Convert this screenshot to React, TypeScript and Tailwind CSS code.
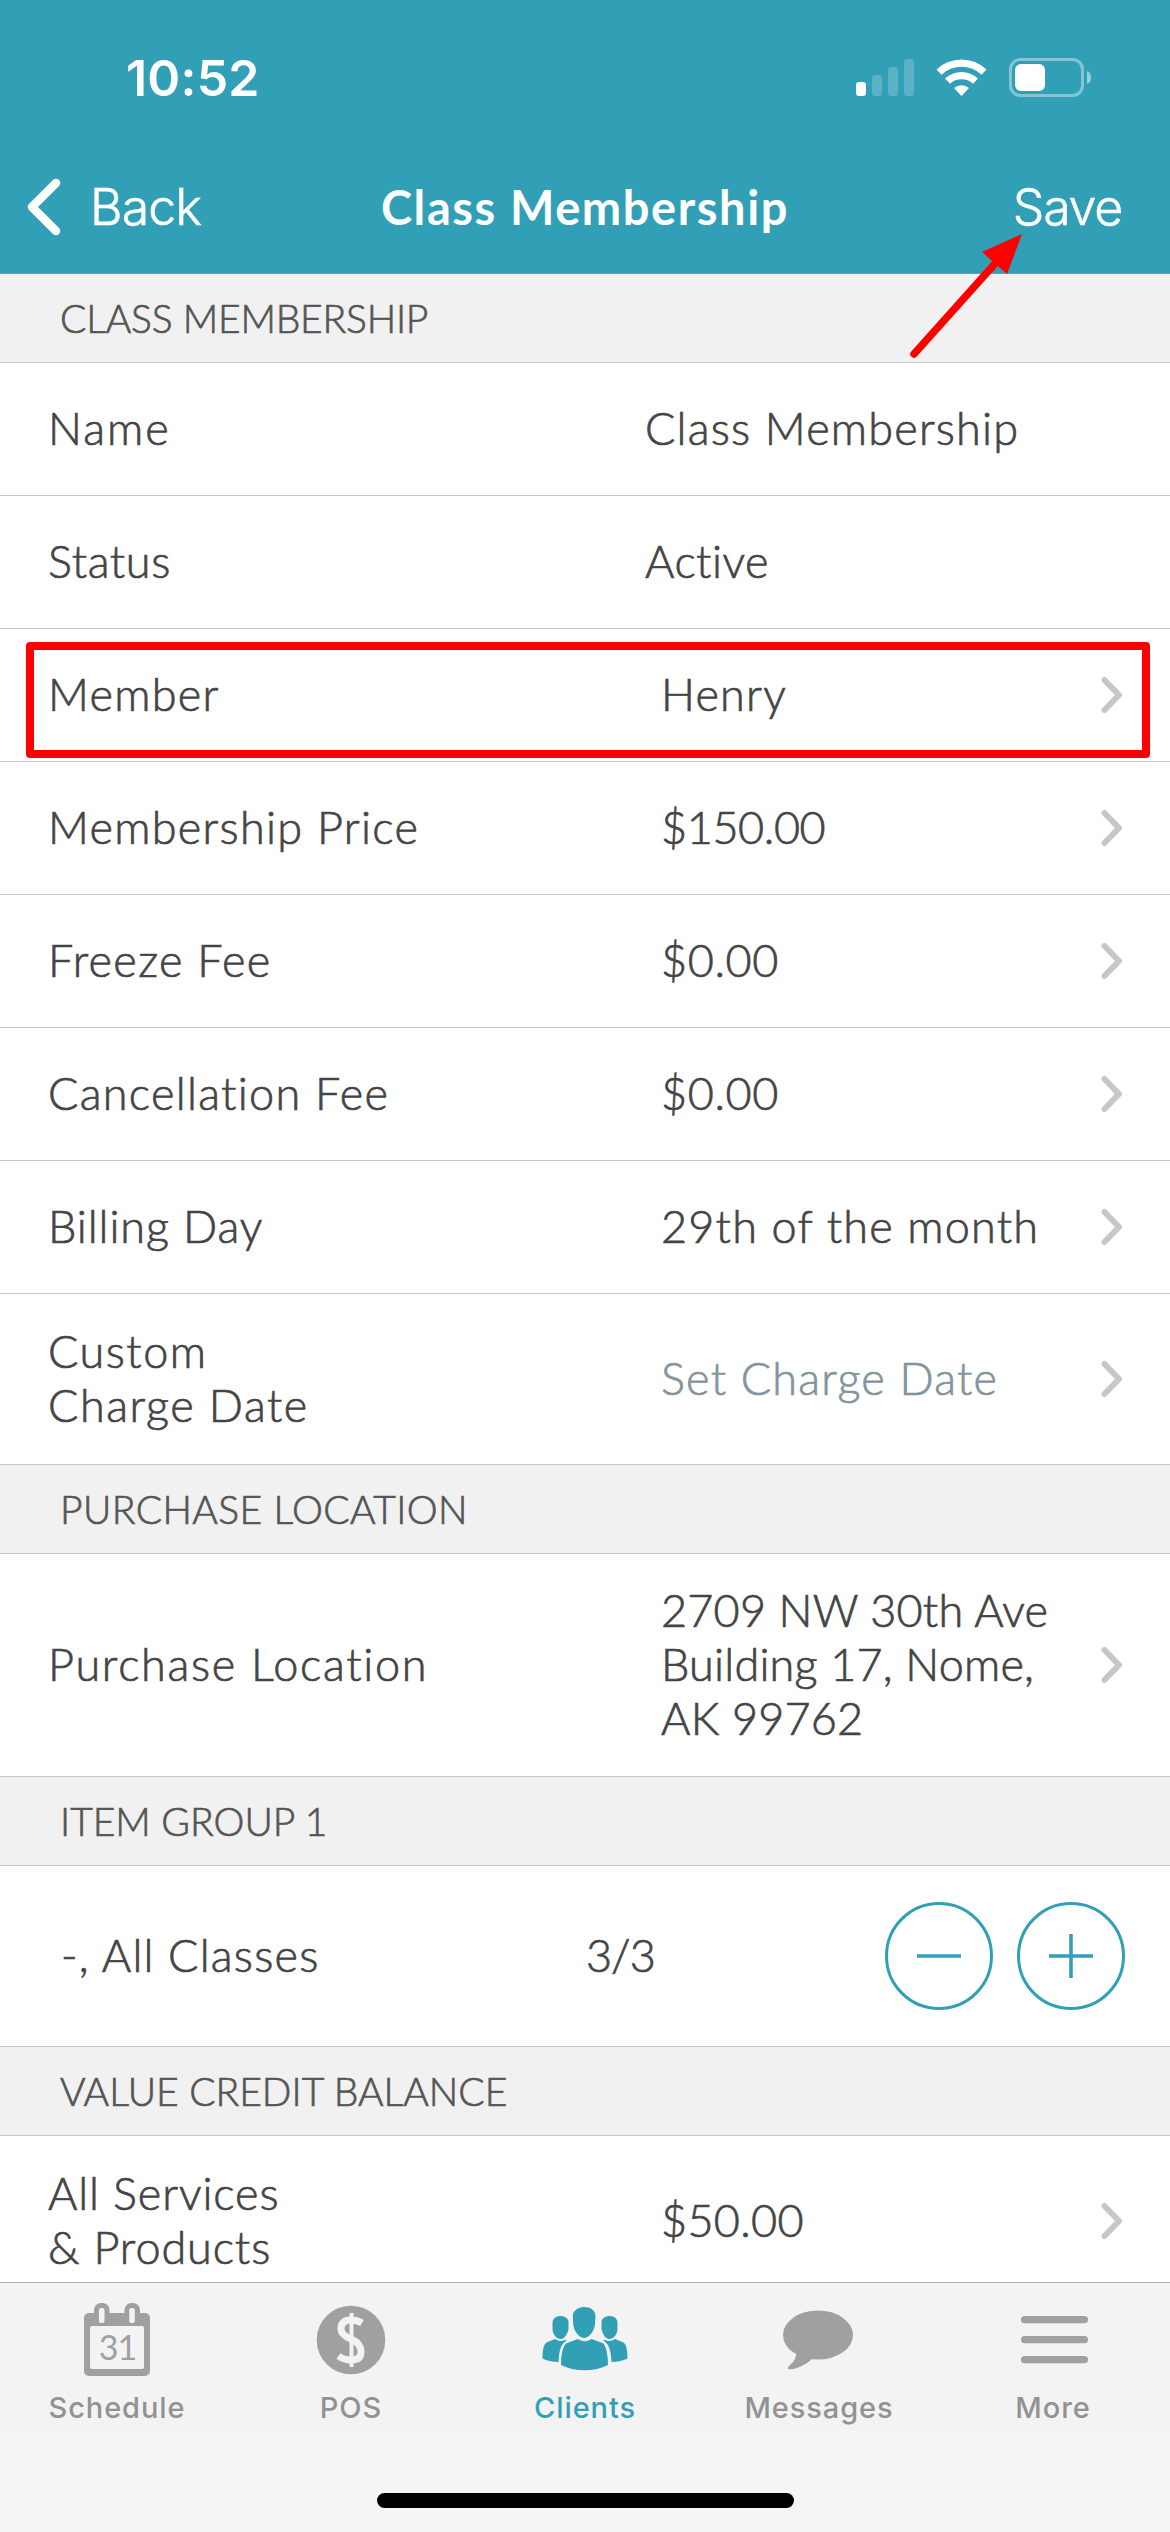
import React from 'react';

type RowProps = {
  label: string;
  value: string;
  size?: string;
  labelTracking?: string;
  valueTracking?: string;
  muted?: boolean;
  arrow?: boolean;
};

function Chevron() {
  return (
    <svg className="w-[24px] h-[40px] shrink-0" viewBox="0 0 24 40" fill="none">
      <path d="M5.500 5L20 20L5.500 35" stroke="#c7c7c9" strokeWidth="6" strokeLinecap="round" strokeLinejoin="round" />
    </svg>
  );
}

function SectionHeader({ title, tracking = 'tracking-[0px]' }: { title: string; tracking?: string }) {
  return (
    <div
      className={`h-[89px] shrink-0 flex items-center pl-[60px] pb-[1px] bg-[#f1f1f1] border-b border-[#c8c8c8] text-[39px] text-[#555] ${tracking}`}
    >
      {title}
    </div>
  );
}

function Row({
  label,
  value,
  size = 'h-[133px]',
  labelTracking = 'tracking-[1.3px]',
  valueTracking = 'tracking-[1.2px]',
  muted,
  arrow = true,
}: RowProps) {
  return (
    <div className={`${size} shrink-0 flex items-center pl-[48px] pr-[47px] border-b border-[#c8c8c8]`}>
      <div className={`${arrow ? 'w-[613px]' : 'w-[597px]'} ${labelTracking} pb-[3px] whitespace-pre-line`}>{label}</div>
      <div className={`flex-1 pb-[3px] whitespace-pre-line ${valueTracking} ${muted ? 'text-[#84949c]' : ''}`}>{value}</div>
      {arrow && <Chevron />}
    </div>
  );
}

function StatusIcons() {
  return (
    <svg className="w-[240px] h-[40px]" viewBox="855 58 240 40" fill="#fff">
      <rect x="856" y="82" width="10" height="14" rx="3" />
      <g opacity="0.2">
        <rect x="872" y="75" width="10" height="21" rx="3" />
        <rect x="888" y="67" width="10" height="29" rx="3" />
        <rect x="904" y="59" width="10" height="37" rx="3" />
      </g>
      <path d="M936.5 69.5a36 36 0 0 1 50 0l-5 5.200a29 29 0 0 0-40 0z" />
      <path d="M945 78.500a24 24 0 0 1 33 0l-5 5.200a17 17 0 0 0-23 0z" />
      <path d="M954 88a11.500 11.500 0 0 1 15 0l-7.500 8z" />
      <rect x="1010.500" y="59.500" width="72" height="36" rx="10" fill="none" stroke="#fff" strokeOpacity="0.4" strokeWidth="3" />
      <rect x="1015" y="64" width="30" height="27" rx="6" />
      <path d="M1087 71q4 1.500 4 6.500t-4 6.500z" opacity="0.5" />
    </svg>
  );
}

function CalendarIcon() {
  return (
    <svg className="w-[90px] h-[76px]" viewBox="72 2301 90 76">
      <rect x="84" y="2313" width="66" height="63" rx="5" fill="#a0a0a0" />
      <rect x="94" y="2303" width="15.500" height="24" rx="7" fill="#a0a0a0" />
      <rect x="124.500" y="2303" width="15.500" height="24" rx="7" fill="#a0a0a0" />
      <rect x="99" y="2308" width="5.500" height="15" rx="2" fill="#f3f3f3" />
      <rect x="129.300" y="2308" width="5.500" height="15" rx="2" fill="#f3f3f3" />
      <rect x="90" y="2326" width="54" height="43" rx="2" fill="#f3f3f3" />
      <text x="117.500" y="2360.300" textAnchor="middle" fontFamily="Lato, sans-serif" fontSize="34" fontWeight="400" letterSpacing="-1" fill="#a0a0a0">31</text>
    </svg>
  );
}

function DollarIcon() {
  return (
    <svg className="w-[90px] h-[76px]" viewBox="306 2301 90 76" fill="none">
      <circle cx="351" cy="2340" r="34.300" fill="#a0a0a0" />
      <path d="M362 2323q-5-3-11-3-10 0-10 9 0 6 10 10 10 4 10 13 0 8-10 8-7 0-12.500-4" stroke="#f3f3f3" strokeWidth="7" />
      <path d="M351.500 2313v54" stroke="#f3f3f3" strokeWidth="4" />
    </svg>
  );
}

function ClientsIcon() {
  return (
    <svg className="w-[90px] h-[76px]" viewBox="539 2301 90 76" fill="#319fb6">
      <path d="M583 2307c6 0 11.500 3 11.500 9l-.4 7c0 6-5 15-11 15s-11-9-11-15l-.3-7c0-5 5-9 11.200-9z" />
      <path d="M577 2339q6.500 4.500 13.500 0l11 4c3.500 2 5.500 11 5.500 22-13 7-34 7-47 0 0-11 2-20 6-22z" />
      <path d="M559 2316c4 0 8.500 2 8.500 6v7c-1 5-4 10-8 10s-8-5-8-10v-6c0-4 3-7 7.500-7z" />
      <path d="M554 2339q5 3.500 10 1l2 .500c-6 3-8 10-8.500 21.500-6 0-12-1.500-16-3.500 0-8 1-14 4-16z" />
      <path d="M609 2316c-4 0-8.500 2-8.500 6v7c1 5 4 10 8 10s8-5 8-10v-6c0-4-3-7-7.500-7z" />
      <path d="M614 2339q-5 3.500-10 1l-2 .500c6 3 8 10 8.500 21.500 6 0 12-1.500 16-3.500 0-8-1-14-4-16z" />
    </svg>
  );
}

function MessageIcon() {
  return (
    <svg className="w-[90px] h-[76px]" viewBox="774 2301 90 76" fill="#a0a0a0">
      <ellipse cx="818" cy="2335" rx="35" ry="24.500" />
      <path d="M796 2351c1 6-2 11-7 15-2 2-.500 4 2 3.300 9-1.300 17-6.300 22-11.300z" />
    </svg>
  );
}

function MoreIcon() {
  return (
    <svg className="w-[90px] h-[76px]" viewBox="1008 2301 90 76" fill="#a0a0a0">
      <rect x="1021" y="2316" width="67" height="7.300" rx="3.600" />
      <rect x="1021" y="2336" width="67" height="7.300" rx="3.600" />
      <rect x="1021" y="2356" width="67" height="7.300" rx="3.600" />
    </svg>
  );
}

const tabs = [
  { name: 'Schedule', icon: <CalendarIcon /> },
  { name: 'POS', icon: <DollarIcon /> },
  { name: 'Clients', icon: <ClientsIcon />, active: true },
  { name: 'Messages', icon: <MessageIcon /> },
  { name: 'More', icon: <MoreIcon /> },
];

export default function App() {
  return (
    <div className="relative w-[1170px] h-[2532px] flex flex-col overflow-hidden bg-white font-['Lato',sans-serif]">
      <header className="h-[274px] shrink-0 bg-[#319fb6] border-b border-[#6f9aa3] text-white font-['Inter',sans-serif]">
        <div className="h-[156px] flex items-center justify-between pl-[126px] pr-[75px]">
          <span className="text-[50px] font-semibold tracking-[0.2px]">10:52</span>
          <StatusIcons />
        </div>
        <div className="h-[102px] grid grid-cols-[1fr_auto_1fr] items-center px-[48px]">
          <div className="flex items-center gap-[28px] -ml-[23px]">
            <svg className="w-[37px] h-[60px]" viewBox="0 0 37 60" fill="none">
              <path d="M31 6L7 30L31 54" stroke="#fff" strokeWidth="8.500" strokeLinecap="round" strokeLinejoin="round" />
            </svg>
            <span className="text-[50px] font-light tracking-[-0.8px] [-webkit-text-stroke:0.6px]">Back</span>
          </div>
          <span className="text-[47px] font-bold tracking-[1.6px] font-['Lato',sans-serif]">Class Membership</span>
          <span className="text-[50px] font-light tracking-[-1.2px] text-right [-webkit-text-stroke:0.6px]">Save</span>
        </div>
      </header>

      <main className="h-[2008px] shrink-0 flex flex-col overflow-hidden text-[45px] leading-[54px] text-[#444] font-light [-webkit-text-stroke:0.7px]">
        <SectionHeader title="CLASS MEMBERSHIP" tracking="tracking-[-0.2px]" />
        <Row label="Name" value="Class Membership" labelTracking="tracking-[2px]" arrow={false} />
        <Row label="Status" value="Active" labelTracking="tracking-[0.6px]" valueTracking="tracking-[0.5px]" arrow={false} />
        <Row label="Member" value="Henry" />
        <Row label="Membership Price" value="$150.00" valueTracking="tracking-[-0.4px]" />
        <Row label="Freeze Fee" value="$0.00" valueTracking="tracking-[0.6px]" />
        <Row label="Cancellation Fee" value="$0.00" valueTracking="tracking-[0.6px]" />
        <Row label="Billing Day" value="29th of the month" labelTracking="tracking-[0.9px]" />
        <Row label={'Custom\nCharge Date'} value="Set Charge Date" size="h-[171px]" labelTracking="tracking-[1.5px]" muted />
        <SectionHeader title="PURCHASE LOCATION" tracking="tracking-[0.4px]" />
        <Row
          label="Purchase Location"
          value={'2709 NW 30th Ave\nBuilding 17, Nome,\nAK 99762'}
          size="h-[223px]"
          labelTracking="tracking-[1.7px]"
          valueTracking="tracking-[0.2px]"
        />
        <SectionHeader title="ITEM GROUP 1" />
        <div className="h-[181px] shrink-0 flex items-center pl-[61px] pr-[45px] border-b border-[#c8c8c8]">
          <span className="w-[525px] tracking-[1.2px] pb-[3px]">-, All Classes</span>
          <span className="flex-1 tracking-[-1px] pb-[3px]">3/3</span>
          <div className="flex gap-[24px]">
            <button className="size-[108px] rounded-full border-[3px] border-[#319fb6] flex items-center justify-center">
              <svg className="size-[44px]" viewBox="0 0 44 44">
                <path d="M0 22H44" stroke="#319fb6" strokeWidth="3.500" />
              </svg>
            </button>
            <button className="size-[108px] rounded-full border-[3px] border-[#319fb6] flex items-center justify-center">
              <svg className="size-[44px]" viewBox="0 0 44 44">
                <path d="M0 22H44M22 0V44" stroke="#319fb6" strokeWidth="3.500" />
              </svg>
            </button>
          </div>
        </div>
        <SectionHeader title="VALUE CREDIT BALANCE" />
        <Row label={'All Services\n& Products'} value="$50.00" size="h-[171px]" labelTracking="tracking-[0.9px]" valueTracking="tracking-[0.3px]" />
      </main>

      <footer className="flex-1 flex flex-col bg-[#f4f5f7] font-['Inter',sans-serif]">
        <nav className="h-[148px] grid grid-cols-5 border-t border-[#b2b2b2] bg-[#f3f3f3]">
          {tabs.map((tab) => (
            <div key={tab.name} className="flex flex-col items-center pt-[18px]">
              {tab.icon}
              <span
                className={`mt-[13px] text-[29px] leading-[36px] font-medium tracking-[0.9px] ${tab.active ? 'text-[#319fb6]' : 'text-[#929292]'}`}
              >
                {tab.name}
              </span>
            </div>
          ))}
        </nav>
        <div className="mt-[63px] mx-auto w-[417px] h-[15px] rounded-full bg-black" />
      </footer>

      {/* callouts drawn over the screen */}
      <div className="absolute left-[26px] top-[642px] w-[1124px] h-[116px] rounded-[4px] border-[8px] border-[#ff0000]" />
      <svg className="absolute left-[900px] top-[225px] w-[130px] h-[140px]" viewBox="900 225 130 140">
        <path d="M914 354L1000 258" stroke="#ff0000" strokeWidth="7.500" strokeLinecap="round" />
        <path d="M1022 234L982 252L1007 274z" fill="#ff0000" />
      </svg>
    </div>
  );
}
